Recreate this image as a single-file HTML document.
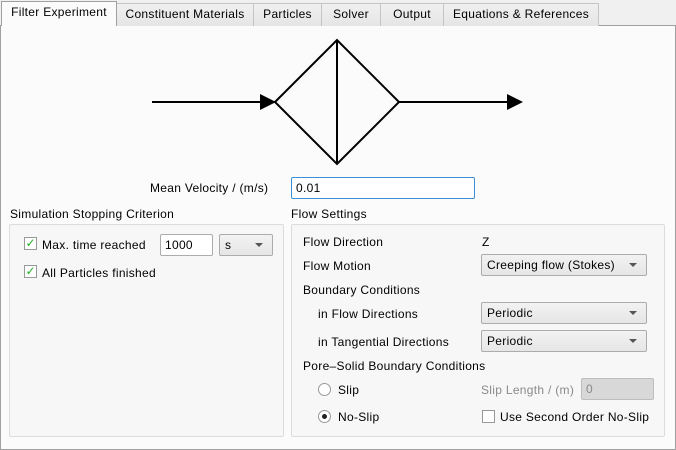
<!DOCTYPE html>
<html><head><meta charset="utf-8"><style>
*{box-sizing:border-box;margin:0;padding:0}
body{width:676px;height:450px;background:#f0f0f0;font-family:"Liberation Sans","DejaVu Sans",sans-serif;font-size:12px;color:#000;position:relative;overflow:hidden;letter-spacing:0.3px}
.a{position:absolute;white-space:nowrap}
.tab{position:absolute;top:3px;height:23px;border:1px solid #c4c4c4;border-bottom:none;background:linear-gradient(#f0f0f0,#e5e5e5);text-align:center;line-height:21px}
.pane{position:absolute;left:0;top:25px;width:676px;height:425px;background:#fbfbfb;border:1px solid #a0a0a0}
.grp{position:absolute;border:1px solid #dcdcdc;border-radius:2px;background:#f7f7f7}
.inp{position:absolute;height:22px;border:1px solid #acacac;background:#fff;padding-left:4px;line-height:20px;border-radius:2px}
.cb{position:absolute;height:22px;border:1px solid #acacac;background:linear-gradient(#f2f2f2,#e6e6e6);padding-left:5px;line-height:20px;border-radius:2px}
.cb:after{content:"";position:absolute;right:9px;top:8px;border-left:4px solid transparent;border-right:4px solid transparent;border-top:4px solid #555}
.chk{position:absolute;width:13px;height:13px;border:1px solid #999;background:#fff;color:#22b022;font-size:12px;font-weight:bold;line-height:11px;text-align:center;letter-spacing:0}
.rad{position:absolute;width:13px;height:13px;border:1px solid #999;border-radius:50%;background:#fff}
</style></head><body>
<div class="pane"></div>
<div class="tab" style="left:1px;width:116px;top:1px;height:25px;background:#fbfbfb;border-color:#a0a0a0;z-index:2">Filter Experiment</div>
<div class="tab" style="left:116px;width:138px">Constituent Materials</div>
<div class="tab" style="left:253px;width:69px">Particles</div>
<div class="tab" style="left:321px;width:60px">Solver</div>
<div class="tab" style="left:380px;width:64px">Output</div>
<div class="tab" style="left:443px;width:156px">Equations &amp; References</div>

<svg class="a" style="left:0;top:0" width="676" height="200">
<g stroke="#000" stroke-width="2" fill="none">
<line x1="152" y1="102" x2="262" y2="102"/>
<polygon points="275,102 337,40 399,102 337,164"/>
<line x1="337" y1="40" x2="337" y2="164"/>
<line x1="399" y1="102" x2="509" y2="102"/>
</g>
<polygon points="260,94 276,102 260,110" fill="#000"/>
<polygon points="507,94 523,102 507,110" fill="#000"/>
</svg>

<div class="a" style="left:150px;top:181px">Mean Velocity / (m/s)</div>
<div class="inp" style="left:291px;top:177px;width:184px;border-color:#3c8fd6">0.01</div>

<div class="a" style="left:10px;top:207px">Simulation Stopping Criterion</div>
<div class="grp" style="left:9px;top:224px;width:275px;height:213px"></div>
<div class="chk" style="left:24px;top:237px">✓</div>
<div class="a" style="left:42px;top:238px">Max. time reached</div>
<div class="inp" style="left:160px;top:234px;width:53px">1000</div>
<div class="cb" style="left:219px;top:234px;width:54px">s</div>
<div class="chk" style="left:24px;top:265px">✓</div>
<div class="a" style="left:42px;top:266px">All Particles finished</div>

<div class="a" style="left:291px;top:207px">Flow Settings</div>
<div class="grp" style="left:291px;top:224px;width:374px;height:213px"></div>
<div class="a" style="left:303px;top:235px">Flow Direction</div>
<div class="a" style="left:482px;top:235px">Z</div>
<div class="a" style="left:303px;top:259px">Flow Motion</div>
<div class="cb" style="left:481px;top:254px;width:166px">Creeping flow (Stokes)</div>
<div class="a" style="left:303px;top:283px">Boundary Conditions</div>
<div class="a" style="left:318px;top:307px">in Flow Directions</div>
<div class="cb" style="left:481px;top:302px;width:166px">Periodic</div>
<div class="a" style="left:318px;top:335px">in Tangential Directions</div>
<div class="cb" style="left:481px;top:330px;width:166px">Periodic</div>
<div class="a" style="left:303px;top:359px">Pore–Solid Boundary Conditions</div>
<div class="rad" style="left:318px;top:383px"></div>
<div class="a" style="left:338px;top:383px">Slip</div>
<div class="a" style="left:481px;top:383px;color:#8a8a8a">Slip Length / (m)</div>
<div class="inp" style="left:581px;top:378px;width:73px;background:#d8d8d8;border-color:#bdbdbd;color:#8a8a8a">0</div>
<div class="rad" style="left:318px;top:410px"></div><div class="a" style="left:322px;top:414px;width:5px;height:5px;border-radius:50%;background:#222"></div>
<div class="a" style="left:338px;top:410px">No-Slip</div>
<div class="chk" style="left:482px;top:410px"></div>
<div class="a" style="left:500px;top:410px">Use Second Order No-Slip</div>
</body></html>
